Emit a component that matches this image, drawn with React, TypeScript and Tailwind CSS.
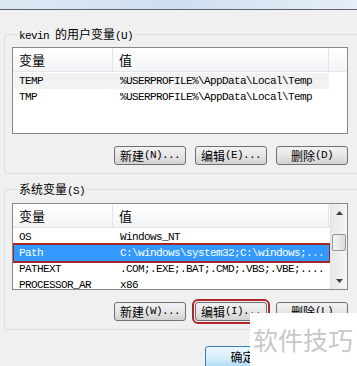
import React from 'react';

type Row = { name: string; value: string; state?: 'soft' | 'selected' };

const mono = { fontFamily: '"Liberation Mono", "DejaVu Sans Mono", monospace' };
const cjk = '[font-family:"Noto_Sans_CJK_SC",sans-serif]';

const userRows: Row[] = [
  { name: 'TEMP', value: '%USERPROFILE%\\AppData\\Local\\Temp', state: 'soft' },
  { name: 'TMP', value: '%USERPROFILE%\\AppData\\Local\\Temp' },
];

const sysRows: Row[] = [
  { name: 'OS', value: 'Windows_NT' },
  { name: 'Path', value: 'C:\\windows\\system32;C:\\windows;...', state: 'selected' },
  { name: 'PATHEXT', value: '.COM;.EXE;.BAT;.CMD;.VBS;.VBE;....' },
  { name: 'PROCESSOR_AR', value: 'x86' },
];

const Ascii: React.FC<{ children: React.ReactNode }> = ({ children }) => (
  <span className="text-[11px] tracking-[-0.6px] [font-family:'Liberation_Mono',monospace]">{children}</span>
);

const WinButton: React.FC<{ label: string; hot: string; flagged?: boolean }> = ({ label, hot, flagged }) => (
  <button
    className={`w-[72px] h-[19px] rounded-[3px] border border-[#707070] bg-gradient-to-b from-[#f2f2f2] via-[#e6e6e6] to-[#d2d2d2] flex items-center justify-center text-[12px] text-black leading-none ${cjk} ${
      flagged ? 'outline-2 outline-[#b0262b] outline-offset-[1px]' : ''
    }`}
  >
    {label}
    <Ascii>{hot}</Ascii>
  </button>
);

const Scrollbar = () => (
  <div className="w-[17px] h-full bg-gradient-to-r from-[#e8e8e8] to-[#f5f5f5] border-l border-[#e0e0e0] flex flex-col items-center">
    <div className="h-[17px] w-full flex items-center justify-center">
      <svg width="7" height="4" viewBox="0 0 7 4">
        <path d="M0 4 L3.5 0 L7 4 Z" fill="#404040" />
      </svg>
    </div>
    <div className="mt-[13px] w-[14px] h-[17px] rounded-[2px] border border-[#979797] bg-gradient-to-r from-[#f4f4f4] to-[#dcdcdc]" />
    <div className="flex-1" />
    <div className="h-[17px] w-full flex items-center justify-center">
      <svg width="7" height="4" viewBox="0 0 7 4">
        <path d="M0 0 L3.5 4 L7 0 Z" fill="#404040" />
      </svg>
    </div>
  </div>
);

const VarList: React.FC<{ rows: Row[]; scroll?: boolean }> = ({ rows, scroll }) => (
  <div className="w-[336px] h-[87px] border border-[#828790] bg-white flex overflow-hidden">
    <div className="flex-1 flex flex-col min-w-0">
      <div className="h-[24px] shrink-0 flex bg-gradient-to-b from-white to-[#f3f4f6] border-b border-[#e3e5e8]">
        <div className={`w-[100px] pl-[6px] flex items-center text-[13px] border-r border-[#e3e5e8] ${cjk}`}>变量</div>
        <div className={`w-[216px] pl-[6px] flex items-center text-[13px] border-r border-[#e3e5e8] ${cjk}`}>值</div>
      </div>
      <div className="pt-[1px] pl-[1px]">
        {rows.map((r) => (
          <div
            key={r.name}
            style={mono}
            className={`h-[16px] w-[315px] flex items-center text-[11px] tracking-[-0.6px] ${
              r.state === 'selected'
                ? 'bg-[#3399ff] text-white outline-2 outline-[#a3262a]'
                : r.state === 'soft'
                ? 'bg-[#f2f2f2] text-black'
                : 'text-black'
            }`}
          >
            <span className="w-[100px] pl-[5px] shrink-0">{r.name}</span>
            <span className="pl-[6px] whitespace-nowrap">{r.value}</span>
          </div>
        ))}
      </div>
    </div>
    {scroll && <Scrollbar />}
  </div>
);

const GroupBox: React.FC<{ title: React.ReactNode; children: React.ReactNode; className?: string }> = ({ title, children, className }) => (
  <fieldset className={`ml-[4px] w-[360px] rounded-[4px] border border-[#d5dfe5] px-[7px] pb-[8px] ${className ?? ''}`}>
    <legend className={`ml-[5px] px-[2px] h-[14px] leading-[14px] text-[12px] text-black ${cjk}`}>{title}</legend>
    {children}
  </fieldset>
);

export default function App() {
  return (
    <div className="relative w-[357px] h-[366px] overflow-hidden bg-[#f0f0f0]">
      <div className="h-[10px] bg-gradient-to-r from-[#dde8f4] via-[#cfdff0] to-[#e6eef7] border-b border-[#5f6368]" />

      <GroupBox className="mt-[17px]" title={<><Ascii>kevin </Ascii>的用户变量<Ascii>(U)</Ascii></>}>
        <div className="mt-[6px]">
          <VarList rows={userRows} />
        </div>
        <div className="w-[336px] mt-[12px] flex justify-end gap-[9px]">
          <WinButton label="新建" hot="(N)..." />
          <WinButton label="编辑" hot="(E)..." />
          <WinButton label="删除" hot="(D)" />
        </div>
      </GroupBox>

      <GroupBox className="mt-[8px]" title={<>系统变量<Ascii>(S)</Ascii></>}>
        <div className="mt-[7px]">
          <VarList rows={sysRows} scroll />
        </div>
        <div className="w-[336px] mt-[12px] flex justify-end gap-[9px]">
          <WinButton label="新建" hot="(W)..." />
          <WinButton label="编辑" hot="(I)..." flagged />
          <WinButton label="删除" hot="(L)" />
        </div>
      </GroupBox>

      <div className="mt-[14px] pl-[205px]">
        <button className={`w-[75px] h-[23px] rounded-[3px] border border-[#3c7fb1] bg-gradient-to-b from-[#eaf6fd] via-[#d9f0fc] to-[#a7d9f5] text-[12px] text-black ${cjk}`}>
          确定
        </button>
      </div>

      <div className={`absolute left-[250px] top-[313px] w-[107px] h-[53px] bg-white flex items-center pl-[3px] text-[25px] text-[#c8c8c8] ${cjk}`}>
        软件技巧
      </div>
    </div>
  );
}
